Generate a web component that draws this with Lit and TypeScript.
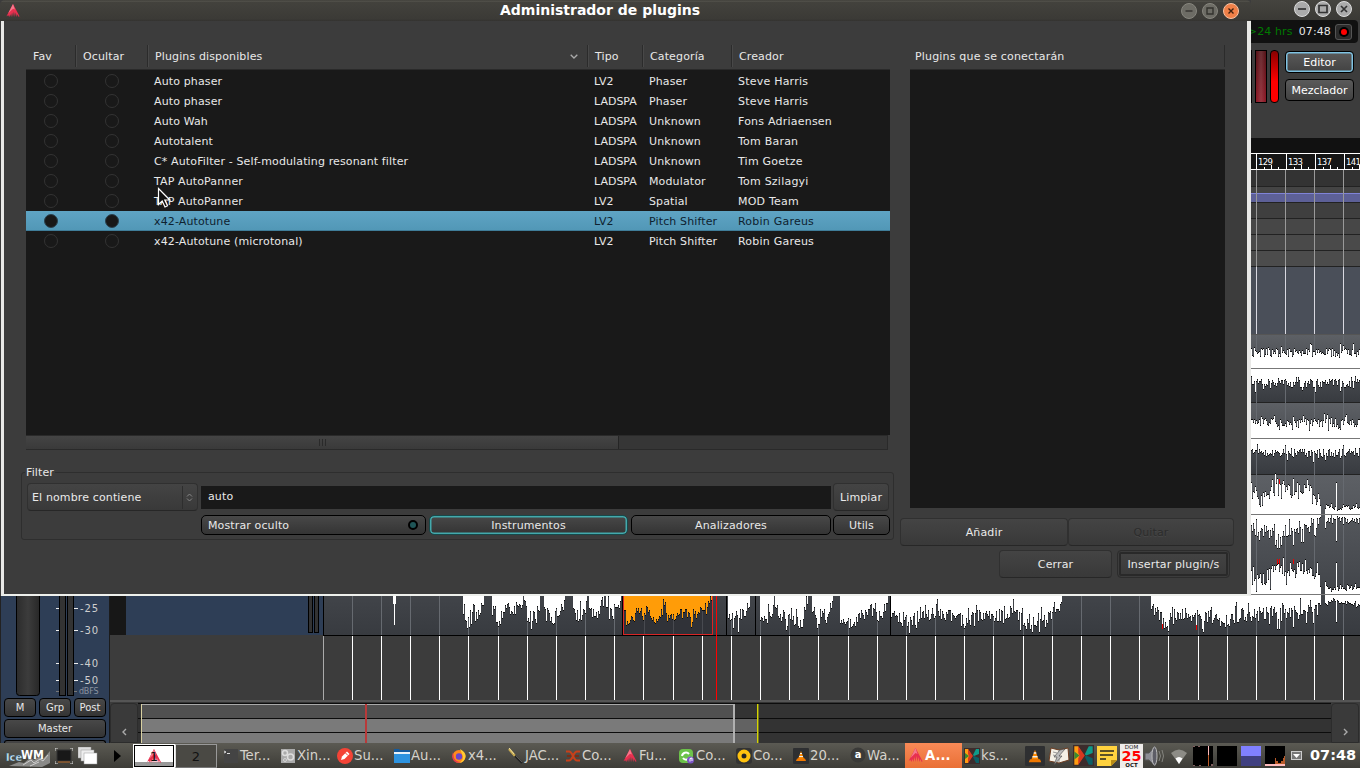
import { LitElement, html, svg, css } from "lit";
import { customElement } from "lit/decorators.js";
import { classMap } from "lit/directives/class-map.js";

const base = css`
  * { box-sizing: border-box; }
  svg { display: block; flex: none; }
  :host { font-family: "DejaVu Sans", sans-serif; font-size: 11px; color: #e8e8e8; }
`;

/* ---------- waveform helpers ---------- */
function rng(seed: number) {
  let s = seed;
  return () => {
    s = (s * 1664525 + 1013904223) % 4294967296;
    return s / 4294967296;
  };
}

type Pt = [number, number];

function level(env: Pt[], x: number) {
  for (let i = 1; i < env.length; i++) {
    if (x <= env[i][0]) {
      const [x0, y0] = env[i - 1];
      const [x1, y1] = env[i];
      return y0 + ((y1 - y0) * (x - x0)) / Math.max(1, x1 - x0);
    }
  }
  return env[env.length - 1][1];
}

/* A filled edge from the base line to a jittered envelope, with dark pixels at each tip. */
function wave(seed: number, baseY: number, env: Pt[], jitter: number, color = "#fff", spikes: Pt[] = []) {
  const r = rng(seed);
  const x0 = env[0][0];
  const x1 = env[env.length - 1][0];
  let d = `M${x0} ${baseY}`;
  let tips = "";
  for (let x = x0; x < x1; x++) {
    const big = r() < 0.25 ? 1.9 : 0.9;
    let y = Math.round(level(env, x) + (r() - 0.5) * jitter * big);
    for (const s of spikes) if (s[0] === x) y = s[1];
    d += `V${y}H${x + 1}`;
    tips += `M${x} ${y > baseY ? y : y - 1}h1v1h-1z`;
  }
  return svg`<path d=${d + `V${baseY}Z`} fill=${color}></path><path d=${tips} fill="#0c0c0c"></path>`;
}

const LOW: Pt[][] = [
  [[463, 609], [466, 624], [472, 617], [480, 613], [484, 599]],
  [[492, 608], [498, 620], [503, 616], [507, 606], [513, 612], [523, 600]],
  [[523, 600], [528, 618], [536, 614], [540, 604]],
  [[544, 611], [549, 617], [555, 616], [560, 612], [565, 600]],
  [[573, 611], [578, 616], [584, 611], [587, 599]],
  [[589, 610], [594, 614], [599, 609], [604, 598]],
  [[606, 608], [612, 614], [617, 606], [622, 597]],
  [[728, 617], [733, 616], [738, 618], [744, 611], [750, 598]],
  [[760, 618], [766, 618], [772, 614], [774, 598]],
  [[775, 604], [779, 619], [785, 624], [791, 614], [797, 622], [803, 624], [808, 598]],
  [[812, 608], [818, 624], [822, 606], [826, 616], [833, 598]],
  [[840, 618], [847, 624], [855, 620], [864, 618], [872, 606], [876, 616], [885, 616], [889, 599]],
  [[891, 610], [897, 618], [912, 622], [922, 611], [935, 613], [950, 616], [963, 622], [980, 615], [993, 616], [1010, 612], [1020, 616], [1026, 626], [1040, 618], [1050, 618], [1053, 609], [1062, 607]],
  [[1150, 601], [1153, 613], [1160, 616], [1166, 627], [1174, 615], [1188, 612], [1200, 620], [1214, 614], [1222, 623], [1236, 616], [1251, 615], [1268, 613], [1284, 615], [1300, 611], [1317, 610], [1319, 603], [1321, 597]],
  [[1325, 604], [1334, 599], [1340, 604], [1348, 602], [1360, 606]],
];
const ORANGE: Pt[][] = [
  [[624, 609], [628, 622], [634, 617], [640, 608], [643, 617], [648, 606]],
  [[648, 610], [654, 622], [659, 618], [664, 606], [668, 620], [674, 616], [684, 612], [692, 620], [698, 612], [706, 605], [712, 598]],
];

const bars = Array.from({ length: 36 }, (_, k) => Math.floor(323 + 29.17 * k));

@customElement("editor-window")
export class EditorWindow extends LitElement {
  static styles = [base, css`
    :host { display: flex; flex-direction: column; height: 743px; background: #3c3c3c; }
    .title { height: 20px; flex: none; background: linear-gradient(#45443f, #3a3935); display: flex; justify-content: flex-end; padding: 0 7px 0 0; gap: 3px; }
    .transport { height: 118px; flex: none; display: flex; flex-direction: column; align-items: flex-end; }
    .clock { height: 23px; width: 120px; margin-right: 2px; background: #111; border-radius: 0 4px 4px 0; display: flex; align-items: center; justify-content: flex-end; padding-right: 6px; letter-spacing: .13px; }
    .left { color: #007a00; margin-right: 6px; }
    .rec { width: 17px; height: 16px; margin-left: 4px; border-radius: 3px; background: #2b2b2b; border: 1px solid #555; display: flex; align-items: center; justify-content: center; }
    .dot { width: 6px; height: 6px; border-radius: 50%; background: #f00; box-shadow: 0 0 0 2px #000; }
    .tools { display: flex; padding: 7px 6px 0 0; }
    .vu { width: 12px; height: 53px; border: 1px solid #000; background: linear-gradient(90deg, transparent, #fff2, transparent), linear-gradient(#541116, #8b1825); margin-right: 3px; }
    .clip { width: 9px; height: 53px; border: 1px solid #000; border-radius: 4px; background: linear-gradient(#800, #f00 60%); margin-right: 6px; }
    .modes { display: flex; flex-direction: column; gap: 6px; padding-top: 1px; }
    .mode { width: 69px; height: 22px; border: 1px solid #000; border-radius: 4px; background: linear-gradient(#5a5a5a, #424242); display: flex; align-items: center; justify-content: center; color: #fff; }
    .on { box-shadow: inset 0 0 0 1.500px #7fc2e2; }
    .body { flex: 1; min-height: 0; display: flex; }
    .strip { width: 110px; flex: none; display: flex; flex-direction: column; justify-content: flex-end; background: #2e3e56; border-left: 1px solid #222; border-right: 1px solid #1b1b1b; padding: 0 3px; }
    .row { display: flex; gap: 3px; margin: 1px 0 2px; }
    .btn { flex: 1; height: 19px; border: 1px solid #000; border-radius: 4px; background: linear-gradient(#484848, #343434); display: flex; align-items: center; justify-content: center; font-size: 10px; }
    .master { flex: none; height: 19px; }
    .stub { flex: none; height: 3px; margin-top: 2px; border: 1px solid #000; border-bottom: 0; border-radius: 4px 4px 0 0; background: #444; }
    .main { flex: 1; display: flex; flex-direction: column; min-width: 0; }
    .arrange { display: flex; height: 562px; }
    .summary { display: flex; border-top: 2px solid #555; height: 43px; }
    .arrow { width: 28px; flex: none; display: flex; align-items: center; justify-content: center; padding-top: 17px; background: #3a3a3a; border: 1px solid #2c2c2c; border-radius: 4px 4px 0 0; margin-top: 1px; color: #999; }
  `];

  meterStrip() {
    const labels: [number, string][] = [[607.5, "-25"], [629.5, "-30"], [662.5, "-40"], [679.5, "-50"]];
    return html`<svg width="102" height="102" viewBox="4 595 102 102">
      <defs><linearGradient id="f" x1="0" x2="1"><stop offset="0" stop-color="#2c2c2c"></stop><stop offset=".5" stop-color="#3c3c3c"></stop><stop offset="1" stop-color="#282828"></stop></linearGradient></defs>
      <rect x="16.5" y="580" width="23" height="115.500" rx="3" fill="url(#f)" stroke="#000"></rect>
      <rect x="59.500" y="580" width="6" height="115.500" fill="#333" stroke="#000"></rect>
      <rect x="67.500" y="580" width="6" height="115.500" fill="#333" stroke="#000"></rect>
      ${labels.map(([y, t]) => svg`<path d="M56 ${y + 1}h3M74 ${y + 1}h4" stroke="#eee"></path><text x="80" y=${y + 4.5} font-size="10" fill="#cfcfcf" textLength="18">${t}</text>`)}
      <path d="M56 691.500h3M74 691.500h3" stroke="#777"></path>
      <text x="79" y="694" font-size="8" fill="#8b93a0" textLength="19.500">dBFS</text>
    </svg>`;
  }

  header() {
    return html`<svg width="213" height="562" viewBox="110 138 213 562">
      <rect x="110" y="138" width="213" height="562" fill="#3c3c3c"></rect>
      <rect x="110" y="570" width="16" height="65" fill="#171717"></rect>
      <rect x="126" y="570" width="197" height="65" fill="#2e3e56"></rect>
      <rect x="308.500" y="570" width="4" height="62.500" fill="#333" stroke="#000"></rect>
      <rect x="314.500" y="570" width="4" height="62.500" fill="#333" stroke="#000"></rect>
    </svg>`;
  }

  canvas() {
    const bands: [number, number, string][] = [
      [138, 15, "#111"], [153, 17, "#151515"], [170, 16, "#333"], [187, 15, "#444"], [203, 15, "#3f3f3f"],
      [219, 15, "#474747"], [235, 15, "#4a4a4a"], [251, 15, "#4c4c4c"], [267, 67, "#4a4f59"],
    ];
    const flat = (y: number): Pt[] => [[1250, y], [1360, y]];
    return html`<svg width="1037" height="562" viewBox="323 138 1037 562" shape-rendering="crispEdges">
      <defs>
        <linearGradient id="t" x2="0" y2="1"><stop offset="0" stop-color="#5d6065"></stop><stop offset="1" stop-color="#383b40"></stop></linearGradient>
      </defs>
      <rect x="323" y="138" width="1037" height="562" fill="#222"></rect>
      ${bands.map(([y, h, c]) => svg`<rect x="323" y=${y} width="1037" height=${h} fill=${c}></rect>`)}
      <rect x="323" y="193" width="1037" height="9" fill="#5d6097"></rect>
      <rect x="323" y="193" width="1037" height="1" fill="#7f83d8"></rect>
      <rect x="323" y="335" width="1037" height="67" fill="url(#t)"></rect>
      <rect x="323" y="403" width="1037" height="71" fill="url(#t)"></rect>
      <rect x="323" y="475" width="1037" height="160" fill="url(#t)"></rect>
      <rect x="323" y="636" width="1037" height="64" fill="#3c3c3c"></rect>
      ${bars.map((x) => svg`<rect x=${x} y="170" width="1" height="97" fill="#999"></rect><rect x=${x} y="267" width="1" height="67" fill="#d8d8e0"></rect><rect x=${x} y="335" width="1" height="300" fill="#666a70"></rect>`)}
      <path d="M1250 153.500h110M1250 169.500h110" stroke="#fff"></path>
      ${[1256, 1286, 1315, 1344].map((x, i) => svg`<path d="M${x + 0.5} 153v16M${x + 8.5} 167v2M${x + 15.5} 165v4M${x + 22.5} 167v2" stroke="#fff"></path><text x=${x + 2} y="165" font-size="8.500" fill="#fff" textLength="15">${129 + i * 4}</text>`)}

      ${wave(11, 368, flat(353), 10)}${wave(12, 368, flat(383), 10)}
      ${wave(13, 438, flat(423), 10)}${wave(14, 438, flat(453), 10)}
      ${wave(15, 514, [[1250, 492], [1262, 500], [1277, 488], [1290, 492], [1308, 490], [1318, 498], [1321, 511]], 18, "#fff", [[1277, 479], [1293, 479], [1307, 480]])}
      ${wave(16, 515, [[1250, 528], [1262, 531], [1277, 534], [1290, 528], [1300, 533], [1316, 523], [1321, 516]], 15, "#fff", [[1277, 548], [1279, 548], [1293, 545]])}
      ${wave(17, 514, [[1325, 506], [1333, 509], [1360, 508]], 5, "#fff", [[1336, 483]])}
      ${wave(18, 515, [[1325, 524], [1333, 518], [1345, 520], [1360, 521]], 5, "#fff", [[1336, 541]])}
      ${wave(19, 594, [[1250, 572], [1262, 580], [1277, 568], [1290, 571], [1308, 569], [1318, 578], [1321, 591]], 18)}
      ${wave(20, 594, [[1325, 586], [1333, 589], [1360, 588]], 5, "#fff", [[1336, 563]])}
      ${LOW.map((e, i) => wave(40 + i, 595, e, e[0][0] > 1320 ? 4 : 15, "#fff", [[1202, 629], [1277, 629], [1279, 629], [1293, 627], [1336, 622]]))}
      <path d="M1250 368.500h110M1250 438.500h110M1250 514.500h110M1250 594.500h110" stroke="#777"></path>
      <rect x="1250" y="334" width="110" height="1" fill="#555"></rect>
      <path d="M1277.500 559v5M1279.500 559v5M1293.500 559v5M1279.500 479v5" stroke="#e00"></path>
      <path d="M1162.500 624v5M1196.500 625v5" stroke="#e00"></path>
      <rect x="393" y="595" width="3" height="9" fill="#fff"></rect><rect x="394" y="595" width="1" height="30" fill="#fff"></rect>
      <rect x="622" y="595" width="91" height="40" fill="#303238"></rect>
      ${[644, 673, 702].map((x) => svg`<rect x=${x} y="595" width="1" height="39" fill="#484a50"></rect>`)}
      ${ORANGE.map((e, i) => wave(70 + i, 595, e, 11, "#ff9c08"))}
      <path d="M622.500 595v40M726.500 595v40M755.500 595v40M890.500 595v40M323.500 595v40M323 635.500h1037" stroke="#000"></path>
      <path d="M623.500 595v39h89v-39" fill="none" stroke="#d92626"></path>
      ${bars.map((x, i) => svg`<rect x=${x} y="636" width="1" height="64" fill=${i ? "#fff" : "#aaa"}></rect>`)}
      <rect x="716" y="595" width="1" height="105" fill="#f00"></rect>
    </svg>`;
  }

  summary() {
    return html`<svg width="1193" height="41" viewBox="138 702 1193 41" shape-rendering="crispEdges">
      <rect x="138" y="702" width="1193" height="41" fill="#333"></rect>
      <rect x="141" y="704" width="593" height="14" fill="#505050"></rect>
      <rect x="141" y="719" width="593" height="13" fill="#7a7a7a"></rect>
      <rect x="141" y="733" width="593" height="10" fill="#7a7a7a"></rect>
      <rect x="735" y="719" width="23" height="24" fill="#626262"></rect>
      <path d="M138 703.500h1193M138 718.500h1193M138 732.500h1193" stroke="#0c0c0c"></path>
      <path d="M141.500 743v-39h592.500" fill="none" stroke="#aaa"></path>
      <rect x="141" y="704" width="1" height="39" fill="#d8d0a0"></rect>
      <rect x="733" y="704" width="2" height="39" fill="#b0b0b0"></rect>
      <rect x="365" y="704" width="2" height="39" fill="#b83a3a"></rect>
      <rect x="757" y="704" width="1" height="39" fill="#d4d400"></rect>
      <rect x="758" y="704" width="1" height="39" fill="#777720"></rect>
    </svg>`;
  }

  render() {
    return html`
      <div class="title">
        ${["M-4 0h8", "M-4-3.500h8v7h-8z", "M-3-3l6 6M3-3l-6 6"].map((d) => html`<svg width="18" height="20" viewBox="-9 -9 18 20">
          <circle r="7.500" fill="#aaa" stroke="#ddd"></circle><path d=${d} stroke="#333" stroke-width="1.700" fill="none"></path></svg>`)}
      </div>
      <div class="transport">
        <div class="clock"><span class="left">&gt;24 hrs</span><span>07:48</span><span class="rec"><span class="dot"></span></span></div>
        <div class="tools">
          <div class="vu"></div><div class="vu"></div><div class="clip"></div>
          <div class="modes"><div class="mode on">Editor</div><div class="mode">Mezclador</div></div>
        </div>
      </div>
      <div class="body">
        <div class="strip">
          ${this.meterStrip()}
          <div class="row"><div class="btn">M</div><div class="btn">Grp</div><div class="btn">Post</div></div>
          <div class="btn master">Master</div>
          <div class="stub"></div>
        </div>
        <div class="main">
          <div class="arrange">${this.header()}${this.canvas()}</div>
          <div class="summary">
            <div class="arrow"><svg width="5" height="8" viewBox="0 0 5 8"><path d="M4 1L1 4l3 3" stroke="#aaa" stroke-width="1.400" fill="none"></path></svg></div>
            ${this.summary()}
            <div class="arrow"><svg width="5" height="8" viewBox="0 0 5 8"><path d="M1 1l3 3-3 3" stroke="#aaa" stroke-width="1.400" fill="none"></path></svg></div>
          </div>
        </div>
      </div>`;
  }
}

/* ---------- plugin manager dialog ---------- */
const logo = (w: number, h: number, hue = "#e8304f") => html`<svg width=${w} height=${h} viewBox="0 0 16 15">
  <path d="M8 0L16 15Q15 12 14 14L13 11 12 14 11 9 10 14 9 8 8 14 7 9 6 14 5 11 4 14 3 12Q1 12 0 15Z" fill=${hue}></path>
  <path d="M8 0L3 10 8 5l2 1z" fill="#f5788c"></path></svg>`;

const PLUGINS = [
  ["Auto phaser", "LV2", "Phaser", "Steve Harris"],
  ["Auto phaser", "LADSPA", "Phaser", "Steve Harris"],
  ["Auto Wah", "LADSPA", "Unknown", "Fons Adriaensen"],
  ["Autotalent", "LADSPA", "Unknown", "Tom Baran"],
  ["C* AutoFilter - Self-modulating resonant filter", "LADSPA", "Unknown", "Tim Goetze"],
  ["TAP AutoPanner", "LADSPA", "Modulator", "Tom Szilagyi"],
  ["TAP AutoPanner", "LV2", "Spatial", "MOD Team"],
  ["x42-Autotune", "LV2", "Pitch Shifter", "Robin Gareus"],
  ["x42-Autotune (microtonal)", "LV2", "Pitch Shifter", "Robin Gareus"],
];

@customElement("plugin-manager")
export class PluginManager extends LitElement {
  static styles = [base, css`
    :host { display: flex; flex-direction: column; width: 1251px; height: 596px; background: #3c3c3c; letter-spacing: .13px; }
    .title { height: 21px; flex: none; display: grid; grid-template-columns: 100px 1fr 100px; align-items: center; background: linear-gradient(#33322e 0, #5a5952 1px, #43423d 2px, #3b3a36 19px, #343330); border-radius: 5px 5px 0 0; }
    .title svg { margin-left: 5px; }
    .name { text-align: center; font-weight: bold; font-size: 14px; letter-spacing: 0; line-height: 18px; padding: 0 51px 2px 0; color: #fff; white-space: nowrap; }
    .ctl { display: flex; gap: 3px; padding: 1px 0 0 29px; }
    .title .ctl svg { margin: 0; }
    .frame { flex: 1; display: flex; border: solid #e9e9e7; border-width: 0 4px 2px 3px; margin-left: 1px; border-bottom-color: #eef0ec; }
    .left { width: 873px; margin: 24px 0 0 17px; flex: none; }
    .table { width: 864px; margin-left: 5px; }
    .head, .tr { display: grid; grid-template-columns: 50px 72px 440px 55px 89px 1fr; align-items: center; }
    .head { height: 25px; border-bottom: 1px solid #2a2a2a; align-items: start; }
    .th { height: 22px; border-right: 1px solid #2b2b2b; padding: 1px 0 0 7px; display: flex; justify-content: space-between; align-items: center; box-shadow: 1px 0 #484848; }
    .th svg { margin-right: 9px; }
    .th:last-child { border: 0; box-shadow: none; }
    .list { height: 365px; background: #191919; padding-top: 1px; }
    .tr { height: 20px; white-space: nowrap; }
    .tr > span { padding-left: 6px; }
    .tr > .tipo { letter-spacing: 0; }
    .tr > .maker { letter-spacing: .22px; }
    .tr .c { display: flex; justify-content: center; padding: 0; }
    .o { width: 14px; height: 14px; border-radius: 50%; border: 1px solid #333; }
    .sel { background: linear-gradient(#5fa4c4, #5197b6); color: #0e2230; box-shadow: inset 0 -1px #3f7d99; }
    .sel .o { background: #181818; border-color: #2b414e; }
    .scroll { height: 15px; width: 862px; border: 1px solid #2a2a2a; border-left: 0; background: #363636; display: flex; }
    .thumb { width: 593px; border-right: 1px solid #252525; background: linear-gradient(#444, #3a3a3a); display: flex; align-items: center; justify-content: center; gap: 2px; }
    .grip { width: 1px; height: 7px; background: #2a2a2a; }
    .filter { position: relative; height: 68px; margin-top: 22px; border: 1px solid #2e2e2e; border-radius: 3px; padding: 10px 4px 0 5px; }
    .legend { position: absolute; left: 3px; top: -7px; background: #3c3c3c; padding: 0 1px; line-height: 14px; }
    .frow { display: grid; grid-template-columns: 171px 630px 55px; gap: 3px; align-items: center; }
    .frow > * { white-space: nowrap; }
    .b { height: 28px; border: 1px solid #303030; border-bottom-color: #272727; border-radius: 4px; background: linear-gradient(#444, #393939); display: flex; align-items: center; justify-content: center; color: #eaeaea; }
    .combo { justify-content: space-between; padding-left: 4px; }
    .spin { border-left: 1px solid #2e2e2e; height: 23px; width: 15px; display: flex; align-items: center; padding-left: 3px; }
    .entry { height: 23px; background: #191919; line-height: 22px; padding-left: 7px; }
    .clear { margin-left: -1px; }
    .frow2 { display: grid; grid-template-columns: 225px 199px 200px 56px; column-gap: 3px; padding: 4px 0 0 174px; }
    .k { height: 20px; border: 1px solid #000; border-radius: 5px; background: linear-gradient(#484848, #343434); display: flex; align-items: center; justify-content: center; }
    .k1 { justify-content: space-between; padding: 0 7px 0 6px; }
    .k2 { box-shadow: inset 0 0 0 1.500px #43a9ac; border-color: #17494a; }
    .k4 { margin-left: -1px; }
    .led { width: 10px; height: 10px; border-radius: 50%; background: #1f5557; border: 2px solid #000; }
    .right { width: 334px; margin: 24px 0 0 6px; flex: none; }
    .to { width: 315px; margin-left: 10px; }
    .to .head { display: block; }
    .to .th { padding-left: 5px; border-right: 1px solid #2b2b2b; letter-spacing: .18px; }
    .box { height: 438px; background: #191919; }
    .pair { display: grid; grid-template-columns: 168px 166px; margin-top: 10px; }
    .off { color: #2c2c2c; text-shadow: 0 1px #484848; }
    .foot { display: flex; gap: 5px; margin-top: 4px; padding-left: 99px; }
    .foot .b { width: 113px; }
    .foot .def { border: 1px solid #2c2c2c; box-shadow: inset 0 0 0 1px #3c3c3c, inset 0 0 0 3px #292929; white-space: nowrap; }
  `];

  ctl() {
    const marks = ["M-3.500 0h7", "M-3-3h6v6h-6z", "M-2.500-2.500l5 5M2.500-2.500l-5 5"];
    return marks.map((d, i) => html`<svg width="18" height="18" viewBox="-9 -9 18 18">
      <circle r="7.500" fill=${i === 2 ? "#f08048" : "#6d6c65"} stroke=${i === 2 ? "#f9c3a4" : "#87867e"}></circle>
      <path d=${d} stroke=${i === 2 ? "#40200f" : "#33322e"} stroke-width="1.400" fill="none"></path></svg>`);
  }

  render() {
    return html`
      <div class="title">
        ${logo(16, 14)}
        <div class="name">Administrador de plugins</div>
        <div class="ctl">${this.ctl()}</div>
      </div>
      <div class="frame">
        <div class="left">
          <div class="table">
            <div class="head">
              <div class="th">Fav</div><div class="th">Ocultar</div>
              <div class="th">Plugins disponibles<svg width="8" height="5" viewBox="0 0 8 5"><path d="M.7.7L4 4 7.300.7" stroke="#aaa" stroke-width="1.300" fill="none"></path></svg></div>
              <div class="th">Tipo</div><div class="th">Categoría</div><div class="th">Creador</div>
            </div>
            <div class="list">
              ${PLUGINS.map((p, i) => html`<div class=${classMap({ tr: true, sel: i === 7 })}>
                <span class="c"><i class="o"></i></span><span class="c"><i class="o"></i></span>
                ${p.map((t, j) => html`<span class=${classMap({ tipo: j === 1, maker: j === 3 })}>${t}</span>`)}
              </div>`)}
            </div>
            <div class="scroll"><div class="thumb"><i class="grip"></i><i class="grip"></i><i class="grip"></i></div></div>
          </div>
          <div class="filter">
            <span class="legend">Filter</span>
            <div class="frow">
              <div class="b combo">El nombre contiene<span class="spin"><svg width="7" height="9" viewBox="0 0 7 9"><path d="M1 3.500L3.500 1 6 3.500M1 5.500L3.500 8 6 5.500" stroke="#888" fill="none"></path></svg></span></div>
              <div class="entry">auto</div>
              <div class="b clear">Limpiar</div>
            </div>
            <div class="frow2">
              <div class="k k1">Mostrar oculto<span class="led"></span></div>
              <div class="k k2">Instrumentos</div>
              <div class="k">Analizadores</div>
              <div class="k k4">Utils</div>
            </div>
          </div>
        </div>
        <div class="right">
          <div class="to">
            <div class="head"><div class="th">Plugins que se conectarán</div></div>
            <div class="box"></div>
          </div>
          <div class="pair"><div class="b">Añadir</div><div class="b off">Quitar</div></div>
          <div class="foot"><div class="b">Cerrar</div><div class="b def">Insertar plugin/s</div></div>
        </div>
      </div>`;
  }
}

/* ---------- task bar ---------- */
const ic = {
  term: svg`<rect x="1" y="1" width="14" height="14" fill="#444"></rect><path d="M1 3l2 1-2 1M4 5.500h3" stroke="#ddd" fill="none"></path>`,
  gear: svg`<rect x="1" y="1" width="14" height="14" fill="#aaa"></rect><circle cx="5" cy="5" r="2.500" fill="none" stroke="#ddd" stroke-width="1.500"></circle><circle cx="10.500" cy="9" r="3" fill="none" stroke="#ddd" stroke-width="1.500"></circle><circle cx="5" cy="12" r="1.500" fill="none" stroke="#d5d5d5"></circle>`,
  pen: svg`<circle cx="8" cy="8" r="8" fill="#f44336"></circle><path d="M4 12l1-3.500L10 3.500l2.500 2.500-5 5z" fill="#fff"></path><path d="M8.500 5l2.500 2.500" stroke="#f44336"></path>`,
  folder: svg`<path d="M0 1h5l1 1h10v13H0z" fill="#155a9c"></path><path d="M0 4h16v2H0z" fill="#e8f2fa"></path><path d="M0 6h16v9H0z" fill="#2d93e0"></path>`,
  fox: svg`<circle cx="8" cy="8.500" r="6.500" fill="#ff8a1c"></circle><path d="M9 1q6 3 5.500 8-1 5-6 6 5-4 3-8z" fill="#ffcc33"></path><path d="M2 4q-2 6 1 9 3 3 7 1-5 0-7-4z" fill="#e63950"></path><circle cx="8" cy="8.500" r="3.200" fill="#6a45c8"></circle>`,
  jack: svg`<path d="M1 1l6 7" stroke="#c8ab50" stroke-width="2.400"></path><path d="M7 8l7 7" stroke="#222" stroke-width="2"></path><path d="M1 0l5 6" stroke="#efe0a0"></path><path d="M8 8l6 6" stroke="#888" stroke-width=".5"></path>`,
  knot: svg`<path d="M1 3.500h3q2 0 4 4.500 2 4.500 4 4.500h3M1 12.500h3q2 0 4-4.500 2-4.500 4-4.500h3" stroke="#c8401a" stroke-width="2" fill="none"></path><path d="M2 8h4M10 8h4" stroke="#8c2408" stroke-width="1.500"></path>`,
  green: svg`<rect x="0" y="1" width="14" height="14" rx="4" fill="#6cc24a"></rect><path d="M3 8a4 4 0 0 1 7-2M11 9a4 4 0 0 1-7 1" stroke="#fff" stroke-width="2" fill="none"></path><circle cx="11.500" cy="12" r="3.500" fill="#7d55c7"></circle><path d="M11 13.500v-3l2-.5v3" stroke="#fff" fill="none"></path>`,
  disc: svg`<rect width="16" height="16" rx="3" fill="#333"></rect><circle cx="8" cy="8" r="4.500" fill="none" stroke="#ffc20e" stroke-width="4"></circle><circle cx="8" cy="8" r="2" fill="#222"></circle>`,
  vlc: svg`<rect width="16" height="16" rx="1" fill="#2e2f31"></rect><path d="M8 3L5 11h6z" fill="#ff8a00"></path><path d="M7 5.500h2M6 8.500h4" stroke="#eee" stroke-width="1.200"></path><path d="M3 13l1-2.500h8l1 2.500z" fill="#f07800"></path>`,
  amz: svg`<circle cx="8" cy="8" r="7.500" fill="#3a3a38"></circle>`,
  kx: svg`<rect width="16" height="16" fill="#3c2c2c"></rect><path d="M1 1h3l4 7-4 7H1z" fill="#ff9c10"></path><path d="M4 1l5 7-5 7v-5l1-2-1-2z" fill="#d83820"></path><path d="M1 5l4 3-4 3z" fill="#3a8a30"></path><path d="M15 1v5l-5 2-1-1 3-6z" fill="#0e9b8a"></path><path d="M15 15h-3L9 9l1-1 5 2z" fill="#0b5f66"></path>`,
};
const icon = (g: unknown, s = 16) => html`<svg width=${s} height=${s} viewBox="0 0 16 16">${g}</svg>`;

@customElement("task-bar")
export class TaskBar extends LitElement {
  static styles = [base, css`
    :host { display: flex; height: 25px; background: linear-gradient(#5b5a53, #3d3c37); align-items: center; }
    .start { width: 133px; display: flex; align-items: center; padding-left: 6px; flex: none; }
    .start svg + svg { margin-left: 5px; }
    .start .play { margin-left: 16px; }
    .ws { width: 42px; height: 24px; flex: none; border: 1px solid #ddd; color: #111; display: grid; place-items: center; font-size: 13px; overflow: hidden; margin-top: 1px; }
    .ws svg, .ws span { grid-area: 1 / 1; }
    .ws1 { background: linear-gradient(#fff 78%, #999 78%); box-shadow: inset 0 0 0 1px #000; border: 1px solid #fff; }
    .ws2 { background: #4a4944; border-color: #999 #999 #777 #ddd; }
    .tasks { display: flex; flex: 1; padding-left: 4px; }
    .task { width: 57px; height: 25px; display: flex; align-items: center; gap: 1px; padding-left: 2px; flex: none; font-family: "DejaVu Sans Condensed", "DejaVu Sans", sans-serif; font-stretch: condensed; font-size: 14.700px; color: #d6d3cc; white-space: nowrap; }
    .task span { padding-bottom: 2px; }
    .act { background: linear-gradient(#f98a57, #e96f35); color: #fff; font-weight: bold; }
    .awrap { display: grid; place-items: center; }
    .awrap > * { grid-area: 1 / 1; }
    .ab { font-size: 11px; font-weight: bold; color: #fff; }
    .tray { display: flex; flex: none; }
    .cell { width: 24px; height: 25px; display: flex; align-items: center; justify-content: center; }
    .clock { width: 73px; flex: none; display: flex; align-items: center; gap: 8px; padding: 0 0 1px 4px; font-weight: bold; font-size: 14.500px; color: #fff; }
  `];

  render() {
    const tasks: [unknown, string, boolean?][] = [
      [icon(ic.term), "Ter..."], [icon(ic.gear), "Xin..."], [icon(ic.pen), "Su..."], [icon(ic.folder), "Au..."],
      [icon(ic.fox), "x4..."], [icon(ic.jack), "JAC..."], [icon(ic.knot), "Co..."], [logo(16, 14), "Fu..."],
      [icon(ic.green), "Co..."], [icon(ic.disc), "Co..."], [icon(ic.vlc), "20..."],
      [html`<span class="awrap">${icon(ic.amz)}<b class="ab">a</b></span>`, "Wa..."],
      [logo(17, 15), "A...", true], [icon(ic.kx), "ks..."],
    ];
    const tray = [
      icon(ic.vlc, 20),
      html`<svg width="22" height="20" viewBox="0 0 22 20"><path d="M3 2l8 2 9-2 1 12-10 3L1 15z" fill="#f4f0e6" stroke="#6d3c20"></path><path d="M11 4v12M5 6l4 1M5 9l4 1" stroke="#999"></path><path d="M17 3l-6 7 3 0-8 9 3-8H6l6-7z" fill="#bbb" stroke="#444" stroke-width=".6"></path></svg>`,
      icon(ic.kx, 21),
      html`<svg width="20" height="20" viewBox="0 0 20 20"><path d="M0 0h20v14l-6 6H0z" fill="#ffd23e"></path><path d="M20 14l-6 6v-6z" fill="#b98c14"></path><path d="M3 5h14M3 9h13M3 13h6" stroke="#5c5026" stroke-width="2"></path></svg>`,
      html`<svg width="23" height="24" viewBox="0 0 23 24"><rect width="23" height="24" fill="#efecea"></rect><text x="11.500" y="5" font-size="5.500" text-anchor="middle" fill="#111">DOM</text><text x="11.500" y="17" font-size="13.500" font-weight="bold" text-anchor="middle" fill="#f00" textLength="20" lengthAdjust="spacingAndGlyphs">25</text><text x="11.500" y="23" font-size="5.500" font-weight="bold" text-anchor="middle" fill="#111">OCT</text></svg>`,
      html`<svg width="22" height="22" viewBox="0 0 22 22"><path d="M1 8h4l6-7q3 10 0 20l-6-6H1z" fill="#8d8d95" stroke="#555"></path><ellipse cx="10.500" cy="11" rx="2.500" ry="9" fill="#5d5d66" stroke="#bbb"></ellipse><path d="M15 6q3 5 0 10M18 5q3 6 0 12" stroke="#85857f" fill="none"></path></svg>`,
      html`<svg width="18" height="18" viewBox="0 0 18 18"><path d="M1 6q8-7 16 0L9 17z" fill="#8d8c86"></path><path d="M5.500 11.500q3.500-3 7 0L9 17z" fill="#fff"></path></svg>`,
      html`<svg width="20" height="20" viewBox="0 0 20 20"><rect width="20" height="20" fill="#000"></rect><path d="M15.500 0v20" stroke="#b85a28"></path><path d="M15.500 0v9" stroke="#fbb"></path><path d="M1 0v1M6 0v1M1 20v-1M7 20v-1M19 20v-2" stroke="#fbb"></path></svg>`,
      html`<svg width="20" height="20" viewBox="0 0 20 20"><rect width="20" height="20" fill="#000"></rect></svg>`,
      html`<svg width="20" height="20" viewBox="0 0 20 20"><rect width="20" height="10" fill="#8080ff"></rect><rect y="10" width="20" height="10" fill="#404080"></rect></svg>`,
      html`<svg width="20" height="20" viewBox="0 0 20 20"><rect width="20" height="20" fill="#000"></rect><path d="M0 18h10v-6h1v3h2v2h3v-2h2v-3h1v-2h1v8z" fill="#b85a28"></path><rect y="18" width="20" height="2" fill="#fbb"></rect></svg>`,
    ];
    return html`
      <div class="start">
        <svg width="44" height="22" viewBox="0 0 44 22"><path d="M3 21l10-4 5 1 6-5 4 2 5-3 4 2 7-8v12l-8 4z" fill="#8a8a88"></path><path d="M17 20l8-5 3 3 6-4 3 2 5-6M24 21l9-4" stroke="#ddd" stroke-width=".8" fill="none"></path><text x="0" y="16" font-size="10.500" font-weight="bold" fill="#cdeaf8" stroke="#1f485e" stroke-width=".3" textLength="16" lengthAdjust="spacingAndGlyphs">Ice</text><text x="15" y="13.500" font-size="12.500" font-weight="bold" fill="#fff" textLength="23" lengthAdjust="spacingAndGlyphs">WM</text></svg>
        <svg width="18" height="16" viewBox="0 0 18 16"><rect x="2" y="2" width="14" height="11" rx="1" fill="#181818" stroke="#333"></rect><path d="M0 3V0h3M15 0h3v3M18 13v3h-3M3 16H0v-3" stroke="#ddd" fill="none"></path><path d="M3 14h12" stroke="#b86a28"></path></svg>
        <svg width="20" height="18" viewBox="0 0 20 18"><rect x="0" y="0" width="13" height="11" fill="#ddd" stroke="#999" stroke-width=".5"></rect><rect x="3" y="3" width="13" height="11" fill="#eee" stroke="#999" stroke-width=".5"></rect><rect x="6" y="6" width="13" height="11" fill="#fff" stroke="#999" stroke-width=".5"></rect></svg>
        <svg class="play" width="7" height="12" viewBox="0 0 7 12"><path d="M0 0l7 6-7 6z" fill="#000"></path></svg>
      </div>
      <div class="ws ws1">${logo(16, 15)}<span>1</span></div>
      <div class="ws ws2"><span>2</span></div>
      <div class="tasks">${tasks.map(([i, t, a]) => html`<div class=${classMap({ task: true, act: !!a })}>${i}<span>${t}</span></div>`)}</div>
      <div class="tray">${tray.map((t) => html`<div class="cell">${t}</div>`)}</div>
      <div class="clock"><svg width="11" height="9" viewBox="0 0 11 9"><rect x=".5" y=".5" width="10" height="8" fill="#777" stroke="#ccc"></rect><path d="M2 3h7L5.500 7z" fill="#fff"></path></svg>07:48</div>`;
  }
}

@customElement("app-root")
export class AppRoot extends LitElement {
  static styles = [base, css`
    :host { display: block; position: relative; width: 1360px; height: 768px; overflow: hidden; background: #3c3c3c; }
    .dialog { position: absolute; left: 0; top: 0; }
    .cursor { position: absolute; left: 157px; top: 187px; }
  `];
  render() {
    return html`
      <editor-window></editor-window>
      <task-bar></task-bar>
      <plugin-manager class="dialog"></plugin-manager>
      <svg class="cursor" width="14" height="22" viewBox="0 0 14 22"><path d="M1.500 1.500v16l3.700-3.500 2.800 6 2.500-1.200-2.700-5.800h5z" fill="#111" stroke="#fff" stroke-width="1.200"></path></svg>`;
  }
}
